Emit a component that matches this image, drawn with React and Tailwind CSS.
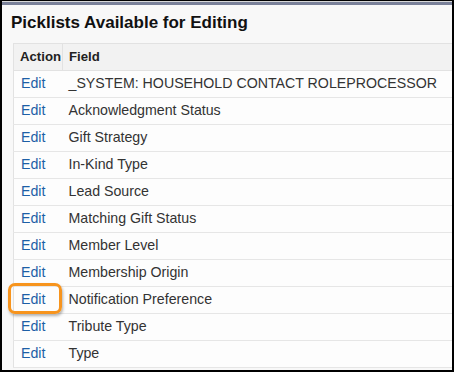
const rows = [
  "_SYSTEM: HOUSEHOLD CONTACT ROLEPROCESSOR",
  "Acknowledgment Status",
  "Gift Strategy",
  "In-Kind Type",
  "Lead Source",
  "Matching Gift Status",
  "Member Level",
  "Membership Origin",
  "Notification Preference",
  "Tribute Type",
  "Type",
];

export default function App() {
  return (
    <div className="w-[454px] h-[372px] overflow-hidden border-black border-t border-l-2 border-r-2 border-b-2 bg-[#f8f8f8] font-['Liberation_Sans',Arial,sans-serif]">
      <div className="h-[4px] bg-[#7a8199] border-t border-[#d8d8d8]" />
      <h2 className="pl-[9px] pt-[5px] h-[38px] text-[17px] font-bold text-[#111]">Picklists Available for Editing</h2>
      <table className="ml-[11px] w-[440px] border-collapse border border-[#e2e2e2] text-[14.2px]">
        <thead>
          <tr className="h-[27px] bg-[#f2f2f2] text-[13.2px] font-bold text-[#222]">
            <th className="w-[49px] border-r border-b border-[#e2e2e2] pl-[6px] text-left font-bold">Action</th>
            <th className="border-b border-[#e2e2e2] pl-[6px] text-left font-bold">Field</th>
          </tr>
        </thead>
        <tbody className="bg-[#fdfdfd]">
          {rows.map((name) => (
            <tr key={name} className="h-[27px] border-b border-[#e6e6e6]">
              <td className="relative pl-[7px] text-[#1d5fa6]">
                {name === "Notification Preference" && (
                  <span className="absolute left-[-6px] right-[1px] top-[-4px] bottom-[-1px] rounded-[7px] border-[3.5px] border-[#f7941d] shadow-[1px_2px_3px_rgba(0,0,0,0.3)]" />
                )}
                <span className="relative">Edit</span>
              </td>
              <td className="pl-[6px] text-[#333]">{name}</td>
            </tr>
          ))}
        </tbody>
      </table>
    </div>
  );
}
